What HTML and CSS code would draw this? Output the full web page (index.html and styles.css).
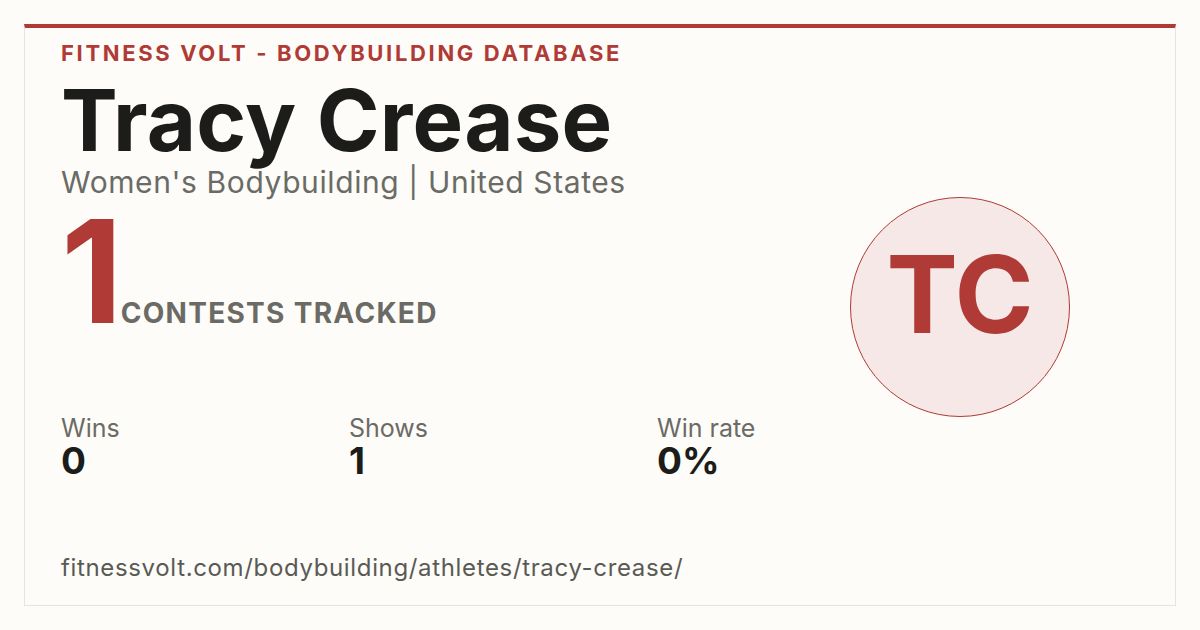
FILE: index.html
```html
<!DOCTYPE html>
<html>
<head>
<meta charset="utf-8">
<link rel="stylesheet" href="styles.css">
</head>
<body>
<div class="card">
  <div class="main">
    <div class="brand">FITNESS VOLT - BODYBUILDING DATABASE</div>
    <div class="name">Tracy Crease</div>
    <div class="sub">Women's Bodybuilding | United States</div>
    <div class="count">
      <span class="num">1</span>
      <span class="count-label">CONTESTS TRACKED</span>
    </div>
    <div class="stats">
      <div class="stat"><div class="stat-label">Wins</div><div class="stat-value">0</div></div>
      <div class="stat"><div class="stat-label">Shows</div><div class="stat-value">1</div></div>
      <div class="stat"><div class="stat-label">Win rate</div><div class="stat-value">0%</div></div>
    </div>
    <div class="url">fitnessvolt.com/bodybuilding/athletes/tracy-crease/</div>
  </div>
  <div class="side">
    <div class="avatar">TC</div>
  </div>
</div>
</body>
</html>
```
FILE: styles.css
```css
html, body {
  margin: 0;
  padding: 0;
  background: #fdfcf8;
}
body {
  width: 1200px;
  height: 630px;
  overflow: hidden;
  font-family: Inter, "Liberation Sans", sans-serif;
}
.card {
  box-sizing: border-box;
  margin: 24px 0 0 24px;
  width: 1152px;
  height: 582px;
  border: 1px solid #e6e4dd;
  border-top: 4px solid #b03a35;
  display: flex;
}
.main {
  flex: 1;
  padding: 14px 0 0 36px;
  display: flex;
  flex-direction: column;
}
.brand {
  font-size: 22px;
  line-height: 22px;
  font-weight: 700;
  letter-spacing: 2.65px;
  color: #b03a35;
}
.name {
  margin-top: 14px;
  font-size: 85px;
  line-height: 85px;
  font-weight: 700;
  color: #1c1c1a;
  letter-spacing: 0.2px;
}
.sub {
  margin-top: 4px;
  font-size: 30px;
  line-height: 30px;
  color: #6b6b66;
  letter-spacing: 0.6px;
}
.count {
  margin-top: 2px;
  display: flex;
  align-items: baseline;
}
.num {
  font-size: 143px;
  line-height: 143px;
  font-weight: 700;
  color: #b03a35;
  margin-right: 2px;
  letter-spacing: -4px;
}
.count-label {
  font-size: 28px;
  font-weight: 700;
  letter-spacing: 1.3px;
  color: #6b6a64;
}
.stats {
  margin-top: 74px;
  display: grid;
  grid-template-columns: 288px 308px auto;
}
.stat-label {
  font-size: 25px;
  line-height: 25px;
  color: #6b6b66;
}
.stat-value {
  margin-top: 1px;
  font-size: 37px;
  line-height: 37px;
  font-weight: 700;
  color: #1c1c1a;
}
.url {
  margin-top: 77px;
  font-size: 24px;
  line-height: 24px;
  color: #5a5a55;
  letter-spacing: 0.65px;
}
.side {
  padding: 169px 105px 0 0;
}
.avatar {
  box-sizing: border-box;
  width: 220px;
  height: 220px;
  border-radius: 50%;
  border: 1.5px solid #b03a35;
  background: #f5e8e6;
  display: flex;
  align-items: center;
  justify-content: center;
  padding-bottom: 26px;
  font-size: 107px;
  line-height: 107px;
  font-weight: 700;
  color: #b03a35;
}
```
